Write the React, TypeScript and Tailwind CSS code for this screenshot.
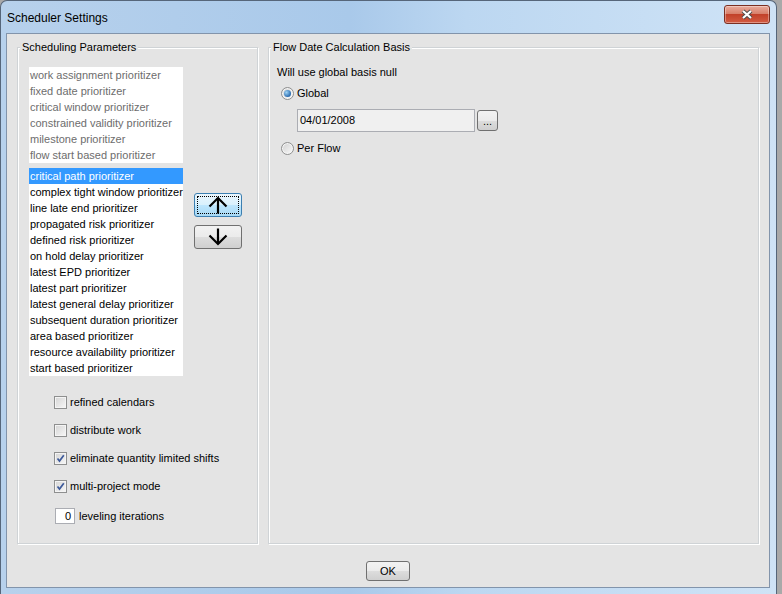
import React from "react";

const disabledItems = [
  "work assignment prioritizer",
  "fixed date prioritizer",
  "critical window prioritizer",
  "constrained validity prioritizer",
  "milestone prioritizer",
  "flow start based prioritizer",
];

const activeItems = [
  "critical path prioritizer",
  "complex tight window prioritizer",
  "line late end prioritizer",
  "propagated risk prioritizer",
  "defined risk prioritizer",
  "on hold delay prioritizer",
  "latest EPD prioritizer",
  "latest part prioritizer",
  "latest general delay prioritizer",
  "subsequent duration prioritizer",
  "area based prioritizer",
  "resource availability prioritizer",
  "start based prioritizer",
];

const options = [
  { label: "refined calendars", checked: false },
  { label: "distribute work", checked: false },
  { label: "eliminate quantity limited shifts", checked: true },
  { label: "multi-project mode", checked: true },
];

function Arrow({ dir }: { dir: "up" | "down" }) {
  return (
    <svg width="20" height="18" viewBox="0 0 20 18" fill="none" stroke="#000" strokeWidth="2.2">
      {dir === "up" ? (
        <>
          <path d="M10 2.5V17.5" />
          <path d="M1.5 10.5L10 2L18.5 10.5" />
        </>
      ) : (
        <>
          <path d="M10 0.5V15.5" />
          <path d="M1.5 7.5L10 16L18.5 7.5" />
        </>
      )}
    </svg>
  );
}

function CheckBox({ checked }: { checked: boolean }) {
  return (
    <span className="w-[13px] h-[13px] shrink-0 border border-[#8e8f8f] bg-[linear-gradient(135deg,#d4d4d4,#f7f7f7)] shadow-[inset_0_0_0_1px_#f4f4f4] flex items-center justify-center">
      {checked && (
        <svg width="9" height="9" viewBox="0 0 9 9" fill="none">
          <path d="M1.5 4.5L3.5 7L7.8 1.2" stroke="#3d5a9a" strokeWidth="1.7" />
        </svg>
      )}
    </span>
  );
}

function Radio({ checked }: { checked: boolean }) {
  return (
    <span className="w-[13px] h-[13px] shrink-0 rounded-full border border-[#8e8f8f] bg-[linear-gradient(135deg,#cfcfcf,#fbfbfb)] shadow-[inset_0_0_0_1px_#f6f6f6] flex items-center justify-center">
      {checked && (
        <span className="w-[7px] h-[7px] rounded-full bg-[radial-gradient(circle_at_35%_35%,#9fd3f5,#2a6cb0_70%,#1b4f86)]" />
      )}
    </span>
  );
}

function GroupBox({ title, className, children }: { title: string; className?: string; children: React.ReactNode }) {
  return (
    <div className={"relative border border-[#cfd3d6] shadow-[inset_1px_1px_0_#fff,1px_1px_0_#fff] " + (className ?? "")}>
      <span className="absolute -top-[8px] left-[2px] px-[2px] bg-[#e4e4e4] text-[11px] leading-[14px] text-black">
        {title}
      </span>
      {children}
    </div>
  );
}

export default function App() {
  return (
    <div className="w-[782px] h-[594px] bg-[#a9a9a9] overflow-hidden font-['Liberation_Sans',Arial,sans-serif] text-[11px] text-black">
      <div className="w-[777px] h-[594px] flex flex-col rounded-t-[7px] border-t border-x border-[#56667a] bg-[linear-gradient(to_right,#b7d1ec,#a9c9ea_45%,#bcd7f1_60%,#cfe3f6)] pb-[6px]">
        {/* title bar */}
        <div className="h-[32px] flex items-start justify-between pl-[6px] pr-[6px]">
          <span className="mt-[10px] text-[12px] leading-[14px] text-black">Scheduler Settings</span>
          <button className="mt-[4px] w-[46px] h-[19px] rounded-[3px] border border-[#7b2f22] bg-[linear-gradient(to_bottom,#e9ab9c,#d8806b_45%,#c2412a_50%,#d35c43)] flex items-center justify-center shadow-[inset_0_0_0_1px_rgba(255,255,255,0.35)]">
            <svg width="14" height="11" viewBox="0 0 14 11" fill="none">
              <path d="M3 2L11 9M11 2L3 9" stroke="#4a4a4a" strokeWidth="4" />
              <path d="M3 2L11 9M11 2L3 9" stroke="#fff" strokeWidth="2.2" />
            </svg>
          </button>
        </div>

        {/* client area */}
        <div className="w-[764px] h-[555px] ml-[5px] border border-[#8294ab] bg-[#e4e4e4] flex flex-col px-[10px] pt-[13px]">
          <div className="flex gap-[10px] h-[497px]">
            <GroupBox title="Scheduling Parameters" className="w-[241px]">
              <div className="flex pl-[11px] pt-[19px]">
                <div className="w-[154px] flex flex-col gap-[5px]">
                  <div className="bg-white">
                    {disabledItems.map((item) => (
                      <div key={item} className="h-[16px] leading-[16px] pl-[1px] text-[#6d6d6d] whitespace-nowrap">
                        {item}
                      </div>
                    ))}
                  </div>
                  <div className="bg-white">
                    {activeItems.map((item, i) => (
                      <div
                        key={item}
                        className={
                          i === 0
                            ? "h-[16px] leading-[16px] pl-[1px] bg-[#3399ff] text-white whitespace-nowrap"
                            : "h-[16px] leading-[16px] pl-[1px] whitespace-nowrap"
                        }
                      >
                        {item}
                      </div>
                    ))}
                  </div>
                </div>
                <div className="ml-[11px] mt-[126px] flex flex-col gap-[8px]">
                  <button className="relative w-[48px] h-[24px] rounded-[3px] border border-[#3c7fb1] bg-[linear-gradient(to_bottom,#eaf6fd,#d9f0fc_50%,#bee6fd_51%,#a7d9f5)] flex items-center justify-center">
                    <span className="absolute inset-[2px] border border-dotted border-black" />
                    <Arrow dir="up" />
                  </button>
                  <button className="w-[48px] h-[24px] rounded-[3px] border border-[#707070] bg-[linear-gradient(to_bottom,#f2f2f2,#ebebeb_50%,#dddddd_51%,#cfcfcf)] flex items-center justify-center">
                    <Arrow dir="down" />
                  </button>
                </div>
              </div>

              <div className="pl-[36px] mt-[18px] flex flex-col gap-[12px]">
                {options.map((o) => (
                  <div key={o.label} className="h-[16px] flex items-center gap-[3px]">
                    <CheckBox checked={o.checked} />
                    <span className="leading-[16px] whitespace-nowrap">{o.label}</span>
                  </div>
                ))}
              </div>
              <div className="pl-[37px] mt-[14px] flex items-center gap-[4px]">
                <span className="w-[20px] h-[16px] bg-white border border-[#abadb3] text-right pr-[3px] leading-[14px]">0</span>
                <span className="leading-[16px]">leveling iterations</span>
              </div>
            </GroupBox>

            <GroupBox title="Flow Date Calculation Basis" className="flex-1">
              <div className="pl-[8px] pt-[16px] flex flex-col">
                <div className="h-[16px] leading-[16px]">Will use global basis null</div>
                <div className="mt-[5px] h-[16px] flex items-center gap-[3px] pl-[4px]">
                  <Radio checked />
                  <span>Global</span>
                </div>
                <div className="mt-[8px] ml-[20px] flex items-center gap-[2px]">
                  <div className="w-[178px] h-[23px] border border-[#abadb3] bg-[#f0f0f0] pl-[2px] leading-[21px]">
                    04/01/2008
                  </div>
                  <button className="w-[21px] h-[21px] rounded-[3px] border border-[#707070] bg-[linear-gradient(to_bottom,#f2f2f2,#ebebeb_50%,#dddddd_51%,#cfcfcf)] leading-[14px] text-[11px]">
                    ...
                  </button>
                </div>
                <div className="mt-[8px] h-[16px] flex items-center gap-[3px] pl-[4px]">
                  <Radio checked={false} />
                  <span>Per Flow</span>
                </div>
              </div>
            </GroupBox>
          </div>

          <div className="mt-[17px] flex justify-center">
            <button className="w-[44px] h-[20px] rounded-[3px] border border-[#707070] bg-[linear-gradient(to_bottom,#f2f2f2,#ebebeb_50%,#dddddd_51%,#cfcfcf)] text-[11px] leading-[18px] text-black">
              OK
            </button>
          </div>
        </div>
      </div>
    </div>
  );
}
